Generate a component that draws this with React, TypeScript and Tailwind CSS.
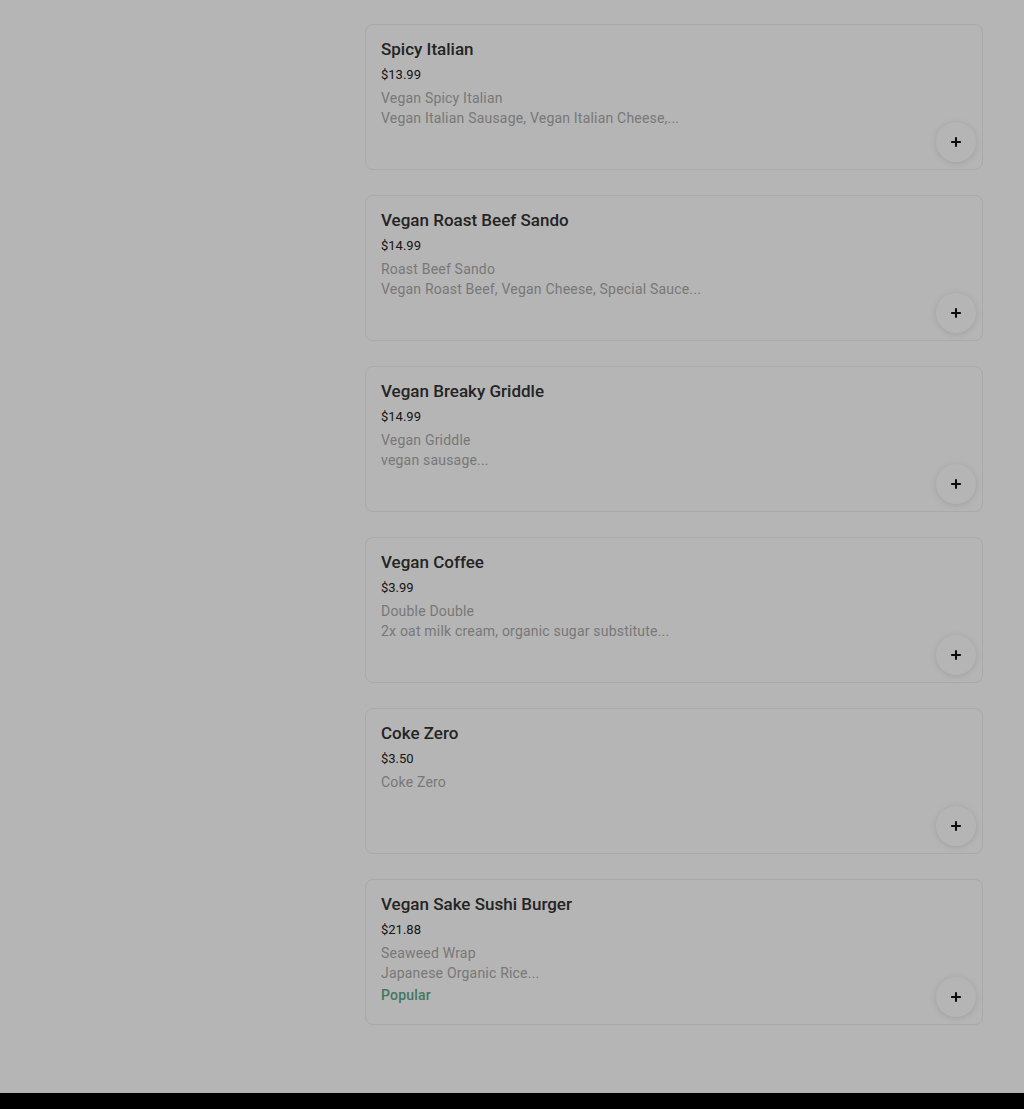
import { Plus } from "lucide-react";

type Item = {
  name: string;
  price: string;
  lines: string[];
  popular?: boolean;
};

const items: Item[] = [
  {
    name: "Spicy Italian",
    price: "$13.99",
    lines: ["Vegan Spicy Italian", "Vegan Italian Sausage, Vegan Italian Cheese,..."],
  },
  {
    name: "Vegan Roast Beef Sando",
    price: "$14.99",
    lines: ["Roast Beef Sando", "Vegan Roast Beef, Vegan Cheese, Special Sauce..."],
  },
  {
    name: "Vegan Breaky Griddle",
    price: "$14.99",
    lines: ["Vegan Griddle", "vegan sausage..."],
  },
  {
    name: "Vegan Coffee",
    price: "$3.99",
    lines: ["Double Double", "2x oat milk cream, organic sugar substitute..."],
  },
  {
    name: "Coke Zero",
    price: "$3.50",
    lines: ["Coke Zero"],
  },
  {
    name: "Vegan Sake Sushi Burger",
    price: "$21.88",
    lines: ["Seaweed Wrap", "Japanese Organic Rice..."],
    popular: true,
  },
];

function MenuCard({ item }: { item: Item }) {
  return (
    <div className="relative h-[146px] rounded-lg border border-[#eeeeee] bg-white px-[15px] pt-3">
      <div className="text-[17px] font-medium leading-6 text-[#333]">{item.name}</div>
      <div className="mt-1 text-[13px] leading-5 text-[#222]">{item.price}</div>
      <div className="mt-[3px] text-[14px] leading-5 tracking-[0.2px] text-[#aaaaaa]">
        {item.lines.map((l) => (
          <div key={l}>{l}</div>
        ))}
      </div>
      {item.popular && (
        <div className="mt-[2px] text-[14px] font-medium leading-5 tracking-[0.2px] text-[#62a787]">
          Popular
        </div>
      )}
      <button className="absolute bottom-[7px] right-[6px] flex h-10 w-10 items-center justify-center rounded-full bg-white shadow-[0_1px_6px_rgba(0,0,0,0.12)]">
        <Plus size={14} strokeWidth={3.5} className="text-[#111]" />
      </button>
    </div>
  );
}

export default function App() {
  return (
    <div className="relative min-h-[1109px] bg-white font-['Roboto',sans-serif]">
      <div className="flex">
        <div className="w-[365px] shrink-0" />
        <div className="flex w-[618px] flex-col gap-[25px] pt-6 pb-[68px]">
          {items.map((it) => (
            <MenuCard key={it.name} item={it} />
          ))}
        </div>
      </div>
      <div className="h-[16px] bg-black" />
      <div className="pointer-events-none fixed inset-0 bg-black/[0.29]" />
    </div>
  );
}
